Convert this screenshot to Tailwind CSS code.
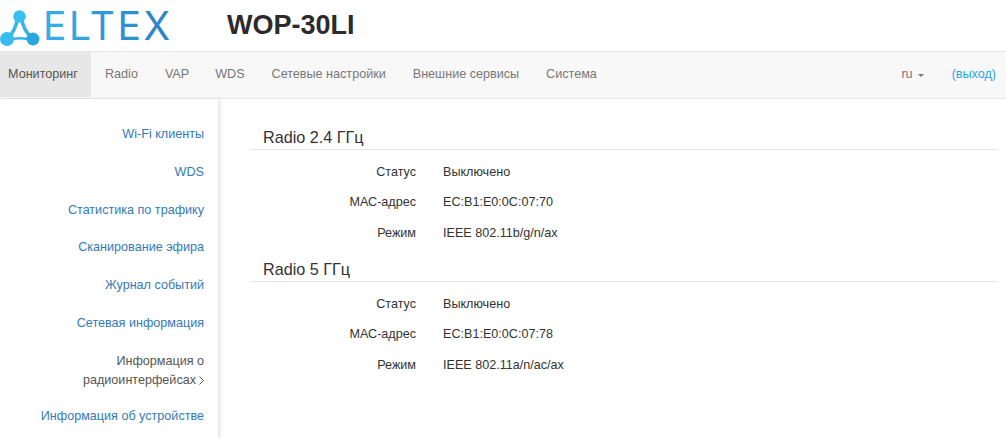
<!DOCTYPE html>
<html lang="ru">
<head>
  <meta charset="UTF-8">
  <title>WOP-30LI</title>
  <script src="https://cdn.jsdelivr.net/npm/@tailwindcss/browser@4"></script>
</head>
<body class="h-[439px] overflow-hidden bg-white font-['Liberation_Sans',Arial,sans-serif] text-[12.6px] text-[#333]">
  <header class="flex h-[51px] items-center">
    <div class="flex w-[227px] items-center">
      <svg class="shrink-0" width="42" height="44" viewBox="0 0 42 44">
        <g fill="none" stroke="#35b4ea" stroke-width="3.5">
          <path d="M17.5 14 Q16 26 8 34"/>
          <path d="M21.5 14 Q23 26 32 34"/>
          <path d="M8 36 Q20 32.5 32 36" stroke-width="2.5"/>
        </g>
        <circle cx="19.5" cy="12.5" r="6.3" fill="#3ac0f0"/>
        <circle cx="7" cy="35" r="7" fill="#38bcef"/>
        <circle cx="33" cy="35" r="6.5" fill="#2ca6e0"/>
      </svg>
      <span class="ml-[1px] mt-[-1px] whitespace-nowrap font-['Inter',sans-serif] text-[39px] leading-none font-normal tracking-[2.5px] text-[#2f9bdc]"><span class="text-[#35aee8]">E</span><span class="text-[#33a6e2]">L</span><span class="text-[#3099d8]">T</span><span class="text-[#2e90d0]">E</span><span class="text-[#2d86c8]">X</span></span>
    </div>
    <h1 class="text-[27px] leading-none font-bold text-[#2b2b2b]">WOP-30LI</h1>
  </header>

  <nav class="flex h-[48px] items-stretch border-y border-[#e7e7e7] bg-[#f8f8f8] text-[#777]">
    <a class="flex h-[45px] w-[91px] items-center bg-[#e7e7e7] pl-[8px] text-[#555]">Мониторинг</a>
    <a class="flex h-[45px] items-center pl-[14px] pr-[14px]">Radio</a>
    <a class="flex h-[45px] items-center pl-[13px] pr-[12px]">VAP</a>
    <a class="flex h-[45px] items-center px-[14px]">WDS</a>
    <a class="flex h-[45px] items-center px-[13px]">Сетевые настройки</a>
    <a class="flex h-[45px] items-center px-[14px]">Внешние сервисы</a>
    <a class="flex h-[45px] items-center px-[13px]">Система</a>
    <div class="ml-auto flex h-[45px] items-center">
      <span>ru</span>
      <span class="ml-[5px] mt-[1px] border-x-[3px] border-t-[3px] border-x-transparent border-t-[#777]"></span>
      <a class="ml-[28px] mr-[10px] text-[#1ea7e1]">(выход)</a>
    </div>
  </nav>

  <div class="flex">
    <aside class="h-[340px] w-[218px] shrink-0 pr-[14px] text-right text-[#337ab7] shadow-[3px_0_4px_-1px_rgba(0,0,0,0.12)]">
      <ul class="flex flex-col pt-[26px]">
        <li class="h-[38px]">Wi-Fi клиенты</li>
        <li class="h-[38px]">WDS</li>
        <li class="h-[37px]">Статистика по трафику</li>
        <li class="h-[38px]">Сканирование эфира</li>
        <li class="h-[38px]">Журнал событий</li>
        <li class="h-[38px]">Сетевая информация</li>
        <li class="h-[55px] leading-[19px] text-[#555]">
          Информация о<br>радиоинтерфейсах<svg class="ml-[3px] inline-block align-[-1px]" width="5" height="9" viewBox="0 0 5 9"><path d="M0.5 0.5 L4.5 4.5 L0.5 8.5" fill="none" stroke="#555" stroke-width="1"/></svg>
        </li>
        <li>Информация об устройстве</li>
      </ul>
    </aside>

    <main class="ml-[32px] w-[748px] pt-[29px]">
      <section>
        <h2 class="border-b border-[#e5e5e5] pb-[3px] pl-[13px] text-[16.2px] leading-[18px]">Radio 2.4 ГГц</h2>
        <dl class="grid grid-cols-[166px_1fr] gap-x-[27px] pt-[7px] leading-[30px]">
          <dt class="text-right">Статус</dt><dd>Выключено</dd>
          <dt class="text-right">МАС-адрес</dt><dd>EC:B1:E0:0C:07:70</dd>
          <dt class="pt-px text-right">Режим</dt><dd class="pt-px">IEEE 802.11b/g/n/ax</dd>
        </dl>
      </section>
      <section class="mt-[12px]">
        <h2 class="border-b border-[#e5e5e5] pb-[3px] pl-[13px] text-[16.2px] leading-[18px]">Radio 5 ГГц</h2>
        <dl class="grid grid-cols-[166px_1fr] gap-x-[27px] pt-[7px] leading-[30px]">
          <dt class="text-right">Статус</dt><dd>Выключено</dd>
          <dt class="text-right">МАС-адрес</dt><dd>EC:B1:E0:0C:07:78</dd>
          <dt class="pt-px text-right">Режим</dt><dd class="pt-px">IEEE 802.11a/n/ac/ax</dd>
        </dl>
      </section>
    </main>
  </div>
</body>
</html>
